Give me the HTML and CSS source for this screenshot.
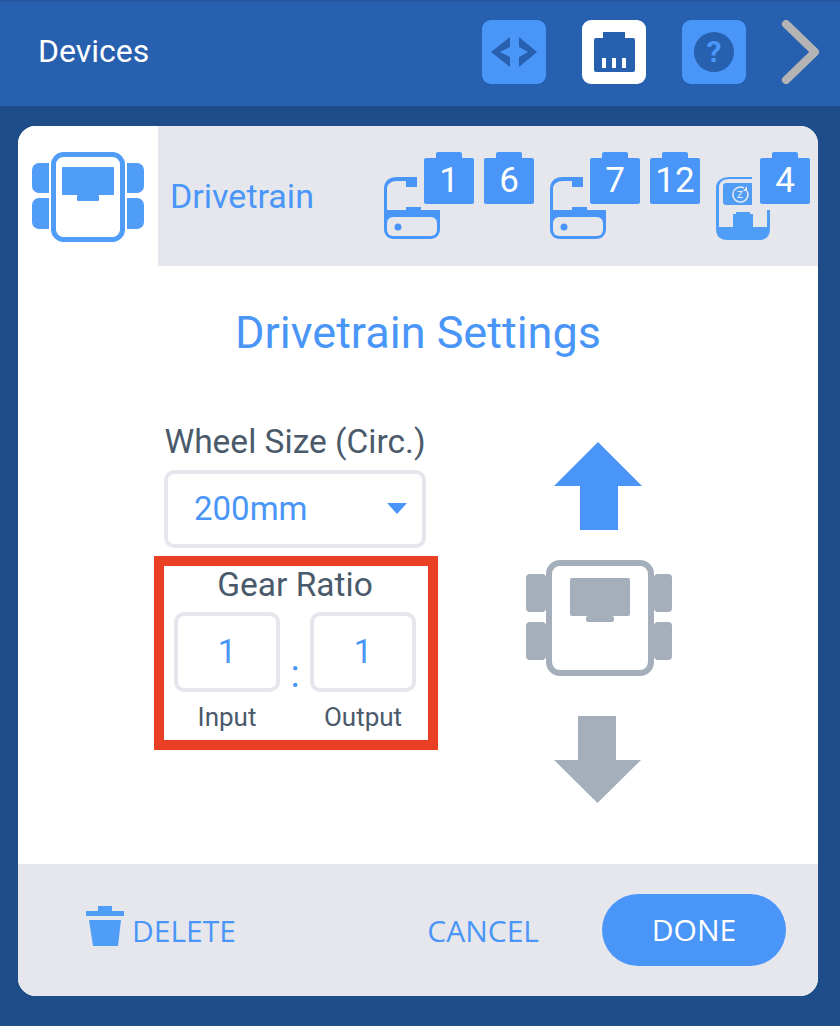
FILE: index.html
```html
<!DOCTYPE html>
<html lang="en">
<head>
    <meta charset="UTF-8">
    <title>Devices</title>
    <link rel="stylesheet" href="styles.css">
</head>
<body>
    <header class="topbar">
        <div class="topbar-title">Devices</div>
        <div class="topbar-btn">
            <svg width="64" height="64" viewBox="0 0 64 64"><path class="dark" d="M9 32 28 17v10l-10 5 10 5v10zM55 32 37 17v10l9 5-9 5v10z"/></svg>
        </div>
        <div class="topbar-btn active">
            <svg width="64" height="64" viewBox="0 0 64 64"><path class="dark" d="M21 12h22v6h8a2 2 0 0 1 2 2v30a2 2 0 0 1-2 2H14a2 2 0 0 1-2-2V20a2 2 0 0 1 2-2h7z"/><path fill="#fff" d="M20 38h4v10h-4zM30 38h4v10h-4zM40 38h4v10h-4z"/></svg>
        </div>
        <div class="topbar-btn help"><span class="help-mark">?</span></div>
        <svg class="topbar-next" width="40" height="64" viewBox="0 0 40 64"><path d="M5 4 34 32 5 60" fill="none" stroke="#b4b4b4" stroke-width="8" stroke-linecap="round" stroke-linejoin="round"/></svg>
    </header>

    <main class="page">
        <div class="card">
            <div class="tabs">
                <div class="tab-active">
                    <svg width="112" height="90" viewBox="0 0 112 90">
                        <g class="blue">
                            <path d="M7 11h10v30H7a7 7 0 0 1-7-7V18a7 7 0 0 1 7-7z"/>
                            <path d="M7 46h10v31H7a7 7 0 0 1-7-7V53a7 7 0 0 1 7-7z"/>
                            <path d="M95 11h10a7 7 0 0 1 7 7v16a7 7 0 0 1-7 7H95z"/>
                            <path d="M95 46h10a7 7 0 0 1 7 7v17a7 7 0 0 1-7 7H95z"/>
                            <rect x="30" y="15" width="52" height="28" rx="1"/>
                            <rect x="45" y="43" width="22" height="6" rx="1"/>
                        </g>
                        <rect x="21.500" y="2.500" width="69" height="85" rx="10" fill="none" stroke="#4f9df7" stroke-width="5"/>
                    </svg>
                </div>
                <div class="tab-name">Drivetrain</div>
                <div class="ports">
                    <div class="port-group">
                        <svg class="motor" width="56" height="64" viewBox="0 0 56 64"><use href="#motor-icon"/></svg>
                        <div class="port">1</div>
                        <div class="port">6</div>
                    </div>
                    <div class="port-group">
                        <svg class="motor" width="56" height="64" viewBox="0 0 56 64"><use href="#motor-icon"/></svg>
                        <div class="port">7</div>
                        <div class="port">12</div>
                    </div>
                    <div class="port-group">
                        <svg class="motor brain" width="54" height="64" viewBox="0 0 54 64">
                            <path class="blue" d="M14 1h22v2H14C7 3 3 6 3 12v39h14V38h3v-2h14v2h3v13h14V34h3v19c0 7-4 11-11 11H11C4 64 0 60 0 53V12C0 5 5 1 14 1z"/>
                            <path class="blue" d="M10 7h26v22H10a3 3 0 0 1-3-3V10a3 3 0 0 1 3-3z"/>
                            <path d="M31 15a7.500 7.500 0 1 1-3-3" fill="none" stroke="#e6e7ec" stroke-width="1.500"/>
                            <path d="M31 10v5h-4z" fill="#e6e7ec"/>
                            <text x="24" y="22" class="zed">z</text>
                        </svg>
                        <div class="port">4</div>
                    </div>
                </div>
            </div>

            <div class="settings">
                <h1 class="settings-title">Drivetrain Settings</h1>
                <div class="settings-row">
                    <div class="form">
                        <div class="form-label">Wheel Size (Circ.)</div>
                        <div class="select">
                            <span>200mm</span>
                            <span class="caret"></span>
                        </div>
                        <div class="gear">
                            <div class="gear-title">Gear Ratio</div>
                            <div class="gear-row">
                                <div class="gear-field">
                                    <div class="gear-input">1</div>
                                    <div class="gear-label">Input</div>
                                </div>
                                <div class="gear-colon">:</div>
                                <div class="gear-field">
                                    <div class="gear-input">1</div>
                                    <div class="gear-label">Output</div>
                                </div>
                            </div>
                        </div>
                    </div>
                    <div class="direction">
                        <svg class="arrow-up" width="88" height="88" viewBox="0 0 88 88"><path fill="#4a96f8" d="M44 0 88 44H64v44H26V44H0z"/></svg>
                        <svg class="robot" width="146" height="116" viewBox="0 0 146 116">
                            <g fill="#a5afbb">
                                <rect x="0" y="14" width="20" height="38" rx="4"/>
                                <rect x="0" y="62" width="20" height="38" rx="4"/>
                                <rect x="128" y="14" width="18" height="38" rx="4"/>
                                <rect x="128" y="62" width="18" height="38" rx="4"/>
                                <rect x="44" y="18" width="60" height="38" rx="2"/>
                                <rect x="60" y="56" width="28" height="6" rx="2"/>
                            </g>
                            <rect x="23" y="3" width="102" height="110" rx="11" fill="none" stroke="#a5afbb" stroke-width="6"/>
                        </svg>
                        <svg class="arrow-down" width="88" height="88" viewBox="0 0 88 88"><path fill="#a5afbb" d="M24 0h38v44h25L43.500 87 0 44h24z"/></svg>
                    </div>
                </div>
            </div>

            <footer class="actions">
                <div class="delete">
                    <svg width="38" height="40" viewBox="0 0 38 40"><path class="blue" d="M12 0h14v5h12v5H0V5h12zM3 14h32l-3 26H7z"/></svg>
                    <span>DELETE</span>
                </div>
                <div class="cancel">CANCEL</div>
                <div class="done">DONE</div>
            </footer>
        </div>
    </main>

    <svg class="defs" width="0" height="0">
        <defs>
            <g id="motor-icon" fill="#4a96f8">
                <path d="M22 1H13C5 1 0 5 0 13v40c0 6 4 10 10 10h36c6 0 10-4 10-10V34H37v-3H22v3H3V13c0-5 4-8 10-8h9z"/>
                <rect x="22" y="1" width="11" height="10"/>
                <rect x="3" y="41" width="50" height="19" rx="6" fill="#e6e7ec"/>
                <circle cx="14" cy="51" r="3.500"/>
            </g>
        </defs>
    </svg>
</body>
</html>
```

FILE: styles.css
```css
* {
    margin: 0;
    padding: 0;
    box-sizing: border-box;
    font-family: 'Roboto', sans-serif;
}

body {
    background: #1e4d89;
    width: 840px;
    height: 1026px;
    overflow: hidden;
}

svg {
    display: block;
    flex-shrink: 0;
}

.blue {
    fill: #4f9df7;
}

.dark {
    fill: #2860b0;
}

.defs {
    position: absolute;
}

/* top bar */
.topbar {
    display: flex;
    align-items: center;
    height: 106px;
    padding: 0 19px 4px 38px;
    background: #2860b0;
    border-top: 2px solid #2558a3;
}

.topbar-title {
    margin-right: auto;
    padding-bottom: 2px;
    font-size: 32px;
    color: #fff;
}

.topbar-btn {
    display: flex;
    align-items: center;
    justify-content: center;
    width: 64px;
    height: 64px;
    margin-right: 36px;
    background: #4a96f8;
    border-radius: 9px;
}

.topbar-btn.active {
    background: #fff;
}

.help {
    margin-right: 35px;
}

.help-mark {
    width: 40px;
    height: 40px;
    border-radius: 50%;
    background: #2860b0;
    color: #4a96f8;
    font-size: 30px;
    font-weight: bold;
    line-height: 40px;
    text-align: center;
}

/* card */
.page {
    padding: 20px 22px 30px 18px;
}

.card {
    display: flex;
    flex-direction: column;
    height: 870px;
    border-radius: 18px;
    background: #fff;
    overflow: hidden;
}

.tabs {
    display: flex;
    align-items: center;
    height: 140px;
    background: #e6e7ec;
}

.tab-active {
    display: flex;
    justify-content: center;
    align-items: center;
    width: 140px;
    height: 140px;
    padding-top: 1px;
    background: #fff;
    margin-right: 12px;
}

.tab-name {
    width: 214px;
    font-size: 34px;
    color: #4a96f8;
}

.ports {
    display: flex;
    gap: 16px;
}

.port-group {
    display: flex;
    gap: 10px;
    height: 88px;
}

.motor {
    margin-top: 24px;
    margin-right: -26px;
}

.motor.brain {
    margin-right: -20px;
}

.port {
    position: relative;
    width: 50px;
    height: 46px;
    margin-top: 6px;
    border-radius: 2px;
    background: #4a96f8;
    color: #fff;
    font-size: 35px;
    line-height: 46px;
    text-align: center;
}

.port::before {
    content: '';
    position: absolute;
    top: -6px;
    left: 12px;
    width: 26px;
    height: 7px;
    border-radius: 2px 2px 0 0;
    background: #4a96f8;
}

.zed {
    font-size: 12px;
    fill: #e6e7ec;
    text-anchor: middle;
}

/* settings */
.settings {
    flex: 1;
    padding-top: 40px;
}

.settings-title {
    font-size: 45px;
    font-weight: normal;
    line-height: 54px;
    color: #4a96f8;
    text-align: center;
}

.settings-row {
    display: flex;
    margin-top: 60px;
    padding-left: 136px;
}

.form {
    width: 284px;
}

.form-label {
    height: 44px;
    margin-bottom: 6px;
    padding-right: 2px;
    font-size: 33.500px;
    line-height: 44px;
    color: #4a5a6b;
    text-align: center;
}

.select {
    display: flex;
    align-items: center;
    justify-content: space-between;
    width: 262px;
    height: 78px;
    margin-left: 10px;
    padding: 0 15px 2px 26px;
    border: 4px solid #e6e7ec;
    border-radius: 10px;
    font-size: 33px;
    color: #4a96f8;
}

.caret {
    width: 0;
    height: 0;
    border-left: 10px solid transparent;
    border-right: 10px solid transparent;
    border-top: 11px solid #4a96f8;
}

.gear {
    height: 194px;
    margin-top: 8px;
    border: 10px solid #e93f25;
}

.gear-title {
    height: 38px;
    padding-right: 2px;
    font-size: 33.500px;
    line-height: 38px;
    color: #4a5a6b;
    text-align: center;
}

.gear-row {
    display: flex;
    justify-content: center;
    margin-top: 8px;
    padding-right: 2px;
}

.gear-input {
    width: 106px;
    height: 80px;
    border: 4px solid #e6e7ec;
    border-radius: 10px;
    font-size: 33px;
    line-height: 72px;
    color: #4a96f8;
    text-align: center;
}

.gear-label {
    margin-top: 10px;
    font-size: 26px;
    line-height: 30px;
    color: #4a5a6b;
    text-align: center;
}

.gear-colon {
    width: 30px;
    padding-top: 42px;
    font-size: 38px;
    line-height: 40px;
    color: #4a96f8;
    text-align: center;
}

.direction {
    display: flex;
    flex-direction: column;
    margin-left: 88px;
    padding-top: 22px;
}

.arrow-up {
    margin-left: 28px;
}

.robot {
    margin-top: 30px;
}

.arrow-down {
    margin-top: 40px;
    margin-left: 28px;
}

/* footer */
.actions {
    display: flex;
    align-items: center;
    height: 132px;
    padding: 0 32px 0 68px;
    background: #e6e7ec;
    font-family: 'Open Sans', sans-serif;
    font-size: 30px;
    color: #4a96f8;
}

.delete {
    display: flex;
    gap: 8px;
    margin-right: auto;
    height: 72px;
    padding-top: 12px;
}

.delete span {
    font-family: 'Open Sans', sans-serif;
    line-height: 50px;
}

.cancel {
    margin-right: 63px;
    font-family: 'Open Sans', sans-serif;
}

.done {
    width: 184px;
    height: 72px;
    border-radius: 36px;
    background: #4a96f8;
    color: #fff;
    font-family: 'Open Sans', sans-serif;
    line-height: 72px;
    text-align: center;
}
```
